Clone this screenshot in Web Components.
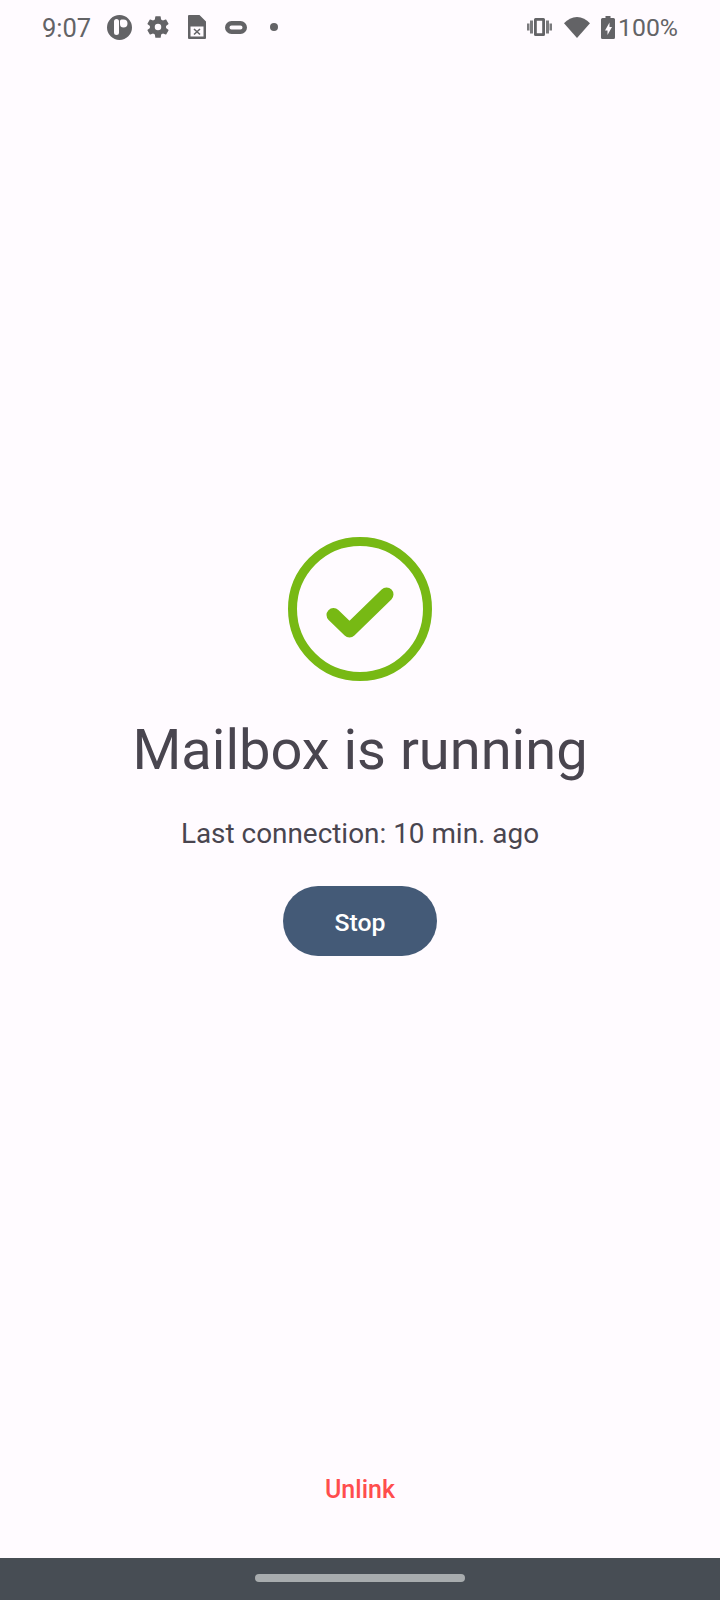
<!DOCTYPE html>
<html>
<head>
<meta charset="utf-8">
<title>Mailbox</title>
<style>
  html, body { margin: 0; height: 100%; }
  body { background: #fffbff; font-family: Roboto, sans-serif; }
</style>
</head>
<body>
<mailbox-screen></mailbox-screen>

<script>
class StatusBar extends HTMLElement {
  constructor () {
    super()
    this.shadow = this.attachShadow({ mode: 'open' })
  }

  connectedCallback () {
    this.shadow.innerHTML = /* html */`
      <style>
        :host{
          display: flex;
          align-items: center;
          justify-content: space-between;
          height: 54px;
          padding: 0 42px;
          color: #636366;
          font-size: 24.800px;
          flex: none;
        }
        .side{
          display: flex;
          align-items: center;
        }
        span{
          padding-top: 1px;
        }
        .time{
          font-size: 25.500px;
        }
        svg{
          display: block;
          fill: #636366;
          flex: none;
        }
      </style>
      <div class="side">
        <span class="time">9:07</span>
        <svg style="margin-left:16px" width="25" height="25" viewBox="0 0 25 25">
          <path fill-rule="evenodd" d="M12.500 0a12.500 12.500 0 1 0 0 25a12.500 12.500 0 0 0 0-25zM9.500 4a2.500 2.500 0 0 1 2.500 2.500v11a2.500 2.500 0 0 1-5 0v-11A2.500 2.500 0 0 1 9.500 4zM16.500 4.500a4 4 0 1 1 0 8a3.500 3.500 0 0 1-3.500-3.500v-3a1.500 1.500 0 0 1 1.500-1.500z"/>
        </svg>
        <svg style="margin-left:13px" width="26" height="26" viewBox="0 0 24 24">
          <path d="M19.400 13c.04-.32.07-.66.07-1s-.03-.68-.07-1l2.100-1.650c.2-.15.25-.42.13-.64l-2-3.460c-.12-.22-.4-.3-.6-.22l-2.500 1c-.52-.4-1.080-.73-1.700-.98l-.38-2.650A.49.49 0 0 0 14 2h-4c-.25 0-.46.18-.5.42l-.37 2.650c-.6.25-1.170.58-1.700.98l-2.480-1c-.23-.08-.5 0-.6.22l-2 3.460c-.13.22-.07.5.12.64L4.570 11c-.04.32-.07.66-.07 1s.03.68.07 1l-2.100 1.650c-.2.15-.25.42-.13.64l2 3.460c.12.22.4.3.6.22l2.500-1c.52.4 1.080.73 1.700.98l.37 2.650c.04.24.25.42.5.42h4c.25 0 .46-.18.5-.42l.37-2.650c.6-.25 1.170-.58 1.700-.98l2.480 1c.23.08.5 0 .6-.22l2-3.460c.12-.22.07-.5-.12-.64zM12 15a3 3 0 1 1 0-6a3 3 0 0 1 0 6z"/>
        </svg>
        <svg style="margin-left:17px" width="18" height="24" viewBox="0 0 18 24">
          <path fill-rule="evenodd" d="M1 0h10.500L18 6.500V23a1 1 0 0 1-1 1H1a1 1 0 0 1-1-1V1a1 1 0 0 1 1-1zM2.500 11.500v10h13v-10z"/>
          <path d="M6 14l6 5.500M12 14l-6 5.500" stroke="#636366" stroke-width="1.600" fill="none"/>
        </svg>
        <svg style="margin-left:19px" width="22" height="13" viewBox="0 0 22 13">
          <rect x="2.250" y="2.250" width="17.500" height="8.500" rx="4.250" fill="none" stroke="#636366" stroke-width="4.500"/>
        </svg>
        <svg style="margin-left:23px" width="8" height="8" viewBox="0 0 8 8">
          <circle cx="4" cy="4" r="4"/>
        </svg>
      </div>
      <div class="side">
        <svg width="25" height="18" viewBox="0 0 25 18">
          <path fill-rule="evenodd" d="M8.500 0h8A1.500 1.500 0 0 1 18 1.500v15a1.500 1.500 0 0 1-1.500 1.500h-8A1.500 1.500 0 0 1 7 16.500v-15A1.500 1.500 0 0 1 8.500 0zM9.800 2.800v12.400h5.400V2.800z"/>
          <path opacity=".85" d="M3 2.500h3v13H3zM19 2.500h3v13h-3zM0 5.500h2.500v7H0zM22.500 5.500H25v7h-2.500z"/>
        </svg>
        <svg style="margin-left:12px" width="26" height="21" viewBox="0 0 26 21">
          <path d="M13 21L0 6.300C3.500 2.400 8 0 13 0s9.500 2.400 13 6.300z"/>
        </svg>
        <svg style="margin-left:11px" width="14" height="23" viewBox="0 0 14 23">
          <path fill-rule="evenodd" d="M4.500 0h5v2h3A1.500 1.500 0 0 1 14 3.500v18a1.500 1.500 0 0 1-1.500 1.500h-11A1.500 1.500 0 0 1 0 21.500v-18A1.500 1.500 0 0 1 1.500 2h3zM8.500 6.500l-4.500 8h2.500v4.500l4.500-8H8.500z"/>
        </svg>
        <span style="margin-left:3.500px">100%</span>
      </div>
    `
  }
}

class StatusMark extends HTMLElement {
  constructor () {
    super()
    this.shadow = this.attachShadow({ mode: 'open' })
  }

  connectedCallback () {
    this.shadow.innerHTML = /* html */`
      <style>
        :host{
          display: block;
          width: 144px;
          height: 144px;
        }
        svg{
          display: block;
        }
      </style>
      <svg width="144" height="144" viewBox="0 0 144 144" fill="none" stroke="#77b914">
        <circle cx="72" cy="72" r="67.500" stroke-width="9"/>
        <path d="M45.500 78L61.500 93.500L98.500 57.500" stroke-width="14" stroke-linecap="round" stroke-linejoin="round"/>
      </svg>
    `
  }
}

class PillButton extends HTMLElement {
  constructor () {
    super()
    this.shadow = this.attachShadow({ mode: 'open' })
  }

  connectedCallback () {
    this.shadow.innerHTML = /* html */`
      <style>
        :host{
          display: flex;
          align-items: center;
          justify-content: center;
          box-sizing: border-box;
          width: 154px;
          height: 70px;
          padding-top: 2px;
          border-radius: 35px;
          background: #445a77;
          color: #fff;
          font-size: 24.800px;
          font-weight: 500;
        }
      </style>
      <slot></slot>
    `
  }
}

class NavBar extends HTMLElement {
  constructor () {
    super()
    this.shadow = this.attachShadow({ mode: 'open' })
  }

  connectedCallback () {
    this.shadow.innerHTML = /* html */`
      <style>
        :host{
          display: flex;
          align-items: center;
          justify-content: center;
          height: 42px;
          background: #474d54;
          flex: none;
        }
        .pill{
          width: 210px;
          height: 8px;
          border-radius: 4px;
          background: #a8acae;
          margin-bottom: 2px;
        }
      </style>
      <div class="pill"></div>
    `
  }
}

class MailboxScreen extends HTMLElement {
  constructor () {
    super()
    this.shadow = this.attachShadow({ mode: 'open' })
  }

  connectedCallback () {
    this.shadow.innerHTML = /* html */`
      <style>
        :host{
          display: flex;
          flex-direction: column;
          height: 1600px;
        }
        main{
          flex: 1;
          display: flex;
          flex-direction: column;
          align-items: center;
          padding-top: 483px;
        }
        h1{
          margin: 31px 0 0;
          font-size: 56px;
          line-height: 76px;
          font-weight: 400;
          color: #49454f;
        }
        p{
          margin: 28px 0 0;
          font-size: 27.900px;
          line-height: 36px;
          color: #49454f;
        }
        pill-button{
          margin-top: 34px;
        }
        .unlink{
          margin-top: auto;
          margin-bottom: 51px;
          font-size: 25px;
          line-height: 34px;
          font-weight: 500;
          color: #ff4d4d;
        }
      </style>
      <status-bar></status-bar>
      <main>
        <status-mark></status-mark>
        <h1>Mailbox is running</h1>
        <p>Last connection: 10 min. ago</p>
        <pill-button>Stop</pill-button>
        <div class="unlink">Unlink</div>
      </main>
      <nav-bar></nav-bar>
    `
  }
}

customElements.define('status-bar', StatusBar)
customElements.define('status-mark', StatusMark)
customElements.define('pill-button', PillButton)
customElements.define('nav-bar', NavBar)
customElements.define('mailbox-screen', MailboxScreen)
</script>
</body>
</html>
